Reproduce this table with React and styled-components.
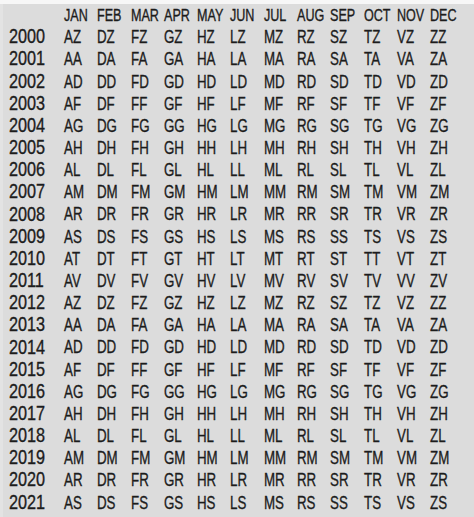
import React from 'react'
import styled, { createGlobalStyle } from 'styled-components'

const GlobalStyle = createGlobalStyle`
  html, body {
    margin: 0;
    padding: 0;
    background: #ffffff;
  }
`

const MONTHS = ['JAN', 'FEB', 'MAR', 'APR', 'MAY', 'JUN', 'JUL', 'AUG', 'SEP', 'OCT', 'NOV', 'DEC']
const MONTH_CODES = ['A', 'D', 'F', 'G', 'H', 'L', 'M', 'R', 'S', 'T', 'V', 'Z']
// year letter cycles every 12 years, starting from Z in 2000
const YEAR_CODES = ['Z', 'A', 'D', 'F', 'G', 'H', 'L', 'M', 'R', 'S', 'T', 'V']

const years = []
for (let y = 2000; y <= 2021; y++) years.push(y)

const App = () => {
  return (
    <>
      <GlobalStyle />
      <Page>
        <TopStrip />
        <Table>
          <YearCell />
          {MONTHS.map(m => (
            <Cell key={m}>
              <Narrow size={17}>{m}</Narrow>
            </Cell>
          ))}
          {years.map(year => {
            const yc = YEAR_CODES[(year - 2000) % 12]
            return (
              <React.Fragment key={year}>
                <YearCell>
                  <Narrow size={19.8} squeeze={0.82}>{year}</Narrow>
                </YearCell>
                {MONTH_CODES.map(mc => (
                  <Cell key={mc}>
                    <Narrow size={18}>{mc + yc}</Narrow>
                  </Cell>
                ))}
              </React.Fragment>
            )
          })}
        </Table>
      </Page>
    </>
  )
}

const Page = styled.div`
  width: 474px;
  height: 517px;
  overflow: hidden;
  background: #dcdcdc;
  font-family: 'Liberation Sans', Arial, sans-serif;
  color: #1c1c1c;
`

const TopStrip = styled.div`
  height: 4px;
  background: #f7f7f7;
`

const Table = styled.div`
  display: grid;
  grid-template-columns: 58px repeat(12, 33.3px);
  grid-auto-rows: 22.17px;
  padding-left: 3px;
  border-left: 3px solid #e3e3e3;
  height: 513px;
`

const Cell = styled.div`
  display: flex;
  align-items: center;
  white-space: nowrap;
`

const YearCell = styled(Cell)`
  padding-left: 3px;
`

// the print face is a condensed grotesque; squeeze Liberation Sans to match
const Narrow = styled.span.withConfig({
  shouldForwardProp: p => p !== 'size' && p !== 'squeeze',
})`
  display: inline-block;
  font-size: ${p => p.size}px;
  line-height: 1;
  -webkit-text-stroke: 0.35px currentColor;
  transform: scaleX(${p => p.squeeze || 0.74});
  transform-origin: left center;
`

export default App
